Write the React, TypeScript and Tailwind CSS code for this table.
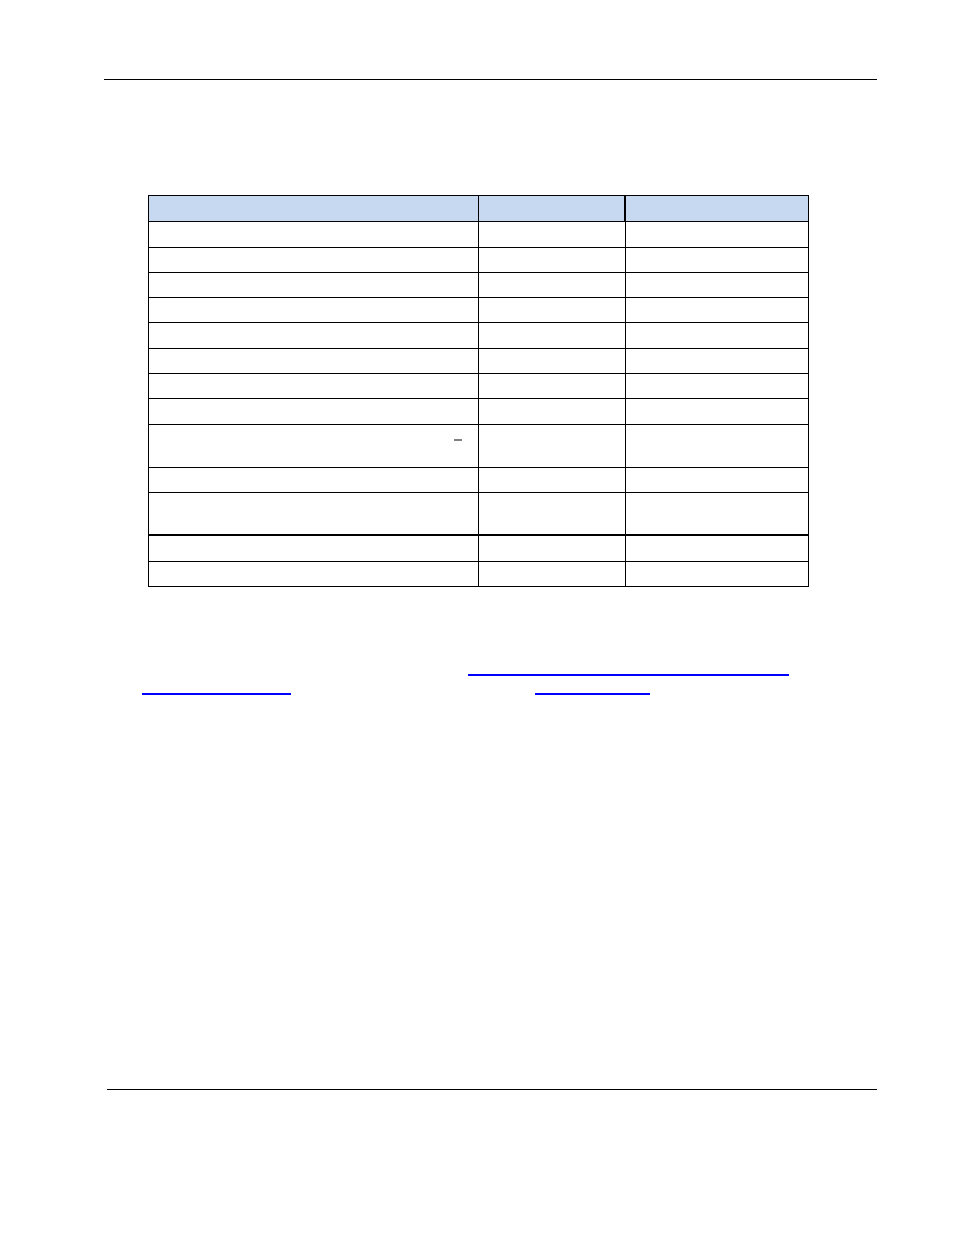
export default function App() {
  const rows = [
    { h: 'h-[26px]' },
    { h: 'h-[25px]' },
    { h: 'h-[25px]' },
    { h: 'h-[25px]' },
    { h: 'h-[26px]' },
    { h: 'h-[25px]' },
    { h: 'h-[25px]' },
    { h: 'h-[26px]' },
    { h: 'h-[43px]', dash: true },
    { h: 'h-[25px]' },
    { h: 'h-[43px]', thick: true },
    { h: 'h-[26px]' },
    { h: 'h-[25px]' },
  ];

  return (
    <div className="relative h-[1235px] w-[954px] bg-white font-['Liberation_Sans',sans-serif]">
      {/* page header rule */}
      <div className="pt-[79px]">
        <div className="ml-[104px] h-px w-[773px] bg-black" />
      </div>

      {/* table */}
      <div className="ml-[148px] mt-[115px] w-[661px] border-l border-r border-t border-black">
        <div className="flex h-[26px] border-b border-black bg-[#c6d9f1]">
          <div className="w-[330px] border-r border-black" />
          <div className="w-[147px] border-r-2 border-black" />
          <div className="flex-1" />
        </div>
        {rows.map((r, i) => (
          <div
            key={i}
            className={`flex ${r.h} ${r.thick ? 'border-b-2' : 'border-b'} border-black`}
          >
            <div className="relative w-[330px] border-r border-black">
              {r.dash && (
                <span className="absolute left-[305px] top-[14px] h-[2px] w-[8px] bg-[#808080]" />
              )}
            </div>
            <div className="w-[147px] border-r border-black" />
            <div className="flex-1" />
          </div>
        ))}
      </div>

      {/* paragraph with links */}
      <div className="mt-[69px]">
        <div className="flex h-[20px] items-end">
          <span className="ml-[468px] h-[2px] w-[321px] bg-[#0000ff]" />
        </div>
        <div className="flex h-[19px] items-end">
          <span className="ml-[142px] h-[2px] w-[149px] bg-[#0000ff]" />
          <span className="ml-[244px] h-[2px] w-[115px] bg-[#0000ff]" />
        </div>
      </div>

      {/* page footer rule */}
      <div className="absolute left-[107px] top-[1089px] h-px w-[770px] bg-black" />
    </div>
  );
}
